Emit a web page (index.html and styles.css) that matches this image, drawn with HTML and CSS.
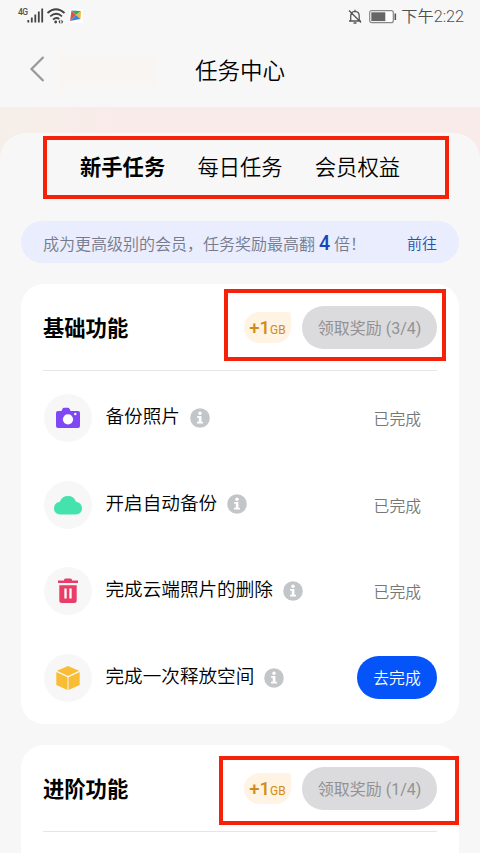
FILE: index.html
```
<!DOCTYPE html>
<html lang="zh-CN">
<head>
<meta charset="utf-8">
<title>任务中心</title>
<link rel="stylesheet" href="styles.css">
</head>
<body>
<svg class="defs" width="0" height="0" aria-hidden="true">
  <symbol id="info" viewBox="0 0 20 20">
    <circle cx="10" cy="10" r="9.8" fill="#c3c6c9"/>
    <circle cx="10" cy="5.3" r="1.7" fill="#fff"/>
    <path d="M7.1 8h4.3v5.8H13v1.8H7v-1.8h1.8V9.7H7.100z" fill="#fff"/>
  </symbol>
</svg>
<div class="phone">
  <div class="status">
    <span class="network">4G</span>
    <svg class="signal" width="17" height="15" viewBox="0 0 17 15">
      <path d="M1.300 12v2.500M4.800 9.500v5M8.300 6.500v8M11.800 3.500v11M15.200 .5v14" stroke="#444" stroke-width="1.800"/>
    </svg>
    <svg class="wifi" width="20" height="18" viewBox="0 0 20 18">
      <path d="M1.500 6Q10-1.500 18.500 6M4.200 9.400Q10.300 4.200 16 9.400M7 12.500Q10.300 9.800 13.300 12" fill="none" stroke="#444" stroke-width="1.800"/>
      <circle cx="9.700" cy="15" r="1.400" fill="#444"/><path d="M14.200 12.500l-1.700 2.300 1.700 2.300zM15.500 12.500l1.700 2.300-1.700 2.300z" fill="#444"/>
    </svg>
    <svg class="kite" width="14" height="14" viewBox="0 0 14 14">
      <rect width="14" height="14" fill="#fff"/>
      <path d="M2.500 1.500L12 2 7 6z" fill="#3ba565"/><path d="M2.500 1.500L7 6 1 12z" fill="#de5146"/><path d="M12 2L11.500 10 7 6z" fill="#f2b936"/><path d="M7 6l4.500 4L1 12z" fill="#3f82dc"/>
    </svg>
    <svg class="bell" width="14" height="16" viewBox="0 0 14 16">
      <path d="M2.700 11.500V6.500Q3 2.500 7 2.300Q11 2.500 11.200 6.500V11.500M1 12H13M7 .8v1.500M5.500 14H8.500M1 1.500L13 13.500" fill="none" stroke="#555" stroke-width="1.300"/>
    </svg>
    <svg class="battery" width="28" height="14" viewBox="0 0 28 14">
      <rect x=".7" y=".7" width="23.600" height="12" rx="2" fill="#fff" stroke="#888" stroke-width="1.200"/>
      <rect x="2.300" y="2.300" width="14" height="8.800" fill="#666"/><path d="M26.300 3.500v6.500" stroke="#555" stroke-width="1.600"/>
    </svg>
    <span class="time">下午2:22</span>
  </div>
  <header class="nav">
    <svg class="back" width="18" height="28" viewBox="0 0 18 28"><path d="M15.500 2L3.500 14 15.500 26" fill="none" stroke="#999" stroke-width="2.200"/></svg>
    <span class="ghost"></span>
    <h1>任务中心</h1>
  </header>
  <main class="hero">
    <div class="panel">
      <nav class="tabs">
        <span class="tab active">新手任务</span><span class="tab">每日任务</span><span class="tab">会员权益</span>
        <i class="mark mark-tabs"></i>
      </nav>
      <div class="banner">
        <span>成为更高级别的会员，任务奖励最高翻 <b>4</b> 倍！</span>
        <a>前往</a>
      </div>
      <section class="card">
        <div class="card-head">
          <h2>基础功能</h2>
          <span class="gift">+1<small>GB</small></span>
          <span class="claim">领取奖励 (3/4)</span>
          <i class="mark mark-basic"></i>
        </div>
        <ul>
          <li>
            <span class="icon"><svg width="24" height="22" viewBox="0 0 24 22"><path d="M2 4H5.500L6.500 1.800Q7 .8 8 .8H12Q13 .8 13.500 1.800L14.500 4H22Q24 4 24 6V19Q24 21 22 21H2Q0 21 0 19V6Q0 4 2 4Z" fill="#8048f4"/><circle cx="12" cy="12.300" r="5.100" fill="#fff"/><circle cx="19.300" cy="7" r="1.200" fill="#fff"/></svg></span>
            <span class="label">备份照片</span><svg class="info"><use href="#info"/></svg><span class="done">已完成</span>
          </li>
          <li>
            <span class="icon"><svg width="28" height="20" viewBox="0 0 28 20"><path d="M6.500 19.500Q0 19 0 13.500Q0 8 5.800 6.800Q8 1 14 1Q20 1 22 6.800Q28 8 28 13.500Q28 19 21.500 19.500Z" fill="#45e2ad"/></svg></span>
            <span class="label">开启自动备份</span><svg class="info"><use href="#info"/></svg><span class="done">已完成</span>
          </li>
          <li>
            <span class="icon"><svg width="22" height="26" viewBox="0 0 22 26"><path d="M1 2.500H7V2Q7 .5 8.500 .5H13.500Q15 .5 15 2V2.500H21V5H1ZM2.300 7.200H19.700V22.500Q19.700 25 17 25H5Q2.300 25 2.300 22.500Z" fill="#e83e67"/><path d="M8.500 10.500V20.500M13.500 10.500V20.500" stroke="#fff" stroke-width="2.300"/></svg></span>
            <span class="label">完成云端照片的删除</span><svg class="info"><use href="#info"/></svg><span class="done">已完成</span>
          </li>
          <li>
            <span class="icon"><svg width="24" height="26" viewBox="0 0 24 26"><path d="M12 1L23 5.700 12 10.900 1 5.700ZM.3 7L11.500 12.200V25L.3 20ZM23.700 7L12.500 12.200V25L23.700 20Z" fill="#f8bd34"/></svg></span>
            <span class="label">完成一次释放空间</span><svg class="info"><use href="#info"/></svg><span class="go">去完成</span>
          </li>
        </ul>
      </section>
      <section class="card">
        <div class="card-head">
          <h2>进阶功能</h2>
          <span class="gift">+1<small>GB</small></span>
          <span class="claim">领取奖励 (1/4)</span>
          <i class="mark mark-advanced"></i>
        </div>
      </section>
    </div>
  </main>
</div>
</body>
</html>
```
FILE: styles.css
```
* { box-sizing: border-box; }
body { margin: 0; background: #f7f7f7; }
h1, h2, ul { margin: 0; padding: 0; list-style: none; }
.defs { position: absolute; }
.phone {
  width: 480px;
  height: 853px;
  overflow: hidden;
  background: #f7f7f7;
  color: #000;
  font-family: Roboto, "Noto Sans CJK SC", sans-serif;
  font-weight: 350;
  white-space: nowrap;
}
.status { display: flex; align-items: center; height: 33px; padding: 0 16px 0 18px; color: #505050; }
.network { width: 9px; margin-top: -9px; font-size: 8.5px; line-height: 10px; font-weight: 500; letter-spacing: -.5px; }
.signal { margin: -2px 2px 0 0; }
.wifi { margin-top: -1px; }
.kite { margin: 0 0 1px 3px; }
.bell { margin-left: auto; }
.battery { margin: 0 4px 0 7px; }
.time { font-size: 16.2px; line-height: 33px; }

.nav { display: flex; align-items: center; height: 74px; padding: 2px 28px 0; }
.back { margin-bottom: 4px; }
.ghost { width: 97px; height: 31px; margin-left: 12px; background: #f9f5f3; }
h1 { margin-left: 40px; font-size: 22.5px; font-weight: 350; line-height: 30px; }

.hero { height: 746px; padding-top: 26px; background: linear-gradient(90deg, #f5efe9, #f9ebe9 25%); }
.panel { height: 720px; padding: 0 21px; border-radius: 26px 26px 0 0; background: #f7f7f7; }
.tabs { position: relative; display: flex; gap: 32px; height: 88px; padding: 19px 0 0 59px; font-size: 21.3px; line-height: 32px; }
.tab { width: 85.400px; }
.active { font-weight: 700; }
.mark { position: absolute; border: 4px solid #f52109; }
.mark-tabs { left: 22px; top: 3px; width: 406px; height: 63px; }

.banner { display: flex; justify-content: space-between; align-items: center; height: 42px; padding: 1px 22px 0; border-radius: 21px; background: #e9edfd; color: #767a8c; font-size: 16px; }
.banner span { display: flex; align-items: baseline; }
.banner b { margin: 0 4px; font-size: 19.5px; line-height: 22px; font-weight: 500; color: #1446b8; }
.banner a { font-size: 15px; color: #1f55a8; }

.card { height: 440px; margin-top: 21px; padding: 0 22px; border-radius: 23px; background: #fff; }
.card-head { position: relative; display: flex; align-items: center; height: 87px; border-bottom: 1px solid #e6e6e6; }
h2 { margin: 0 auto 1px 0; font-size: 21.3px; font-weight: 700; }
.gift { display: flex; align-items: baseline; justify-content: center; width: 47px; height: 31px; margin-right: 11px; border-radius: 16px 3px 16px 16px; background: #fff3e4; color: #d18b16; font-size: 18.5px; font-weight: 500; line-height: 33px; }
small { font-size: 12px; font-weight: 400; }
.claim { width: 135px; height: 43px; border-radius: 22px; background: #dbdbdd; color: #929294; font-size: 16px; font-weight: 400; line-height: 45px; text-align: center; }
.mark-basic { left: 181px; top: 5px; width: 222px; height: 72px; }
.mark-advanced { left: 176px; top: 11px; width: 240px; height: 69px; }

ul { padding-top: 4px; }
li { display: flex; align-items: center; height: 86.600px; }
.icon { display: flex; align-items: center; justify-content: center; width: 48px; height: 48px; margin-left: 1px; border-radius: 50%; background: #f7f7f8; }
.label { margin: 0 10px 2px 13.5px; font-size: 18.6px; line-height: 28px; }
.info { width: 20px; height: 20px; margin-bottom: 1px; }
.done { margin: 1px 16px 0 auto; color: #777; font-size: 15.8px; }
.go { width: 80px; height: 43px; margin: 0 0 1px auto; border-radius: 22px; background: #0554fa; color: #fff; font-size: 15.8px; line-height: 45px; text-align: center; }
```
